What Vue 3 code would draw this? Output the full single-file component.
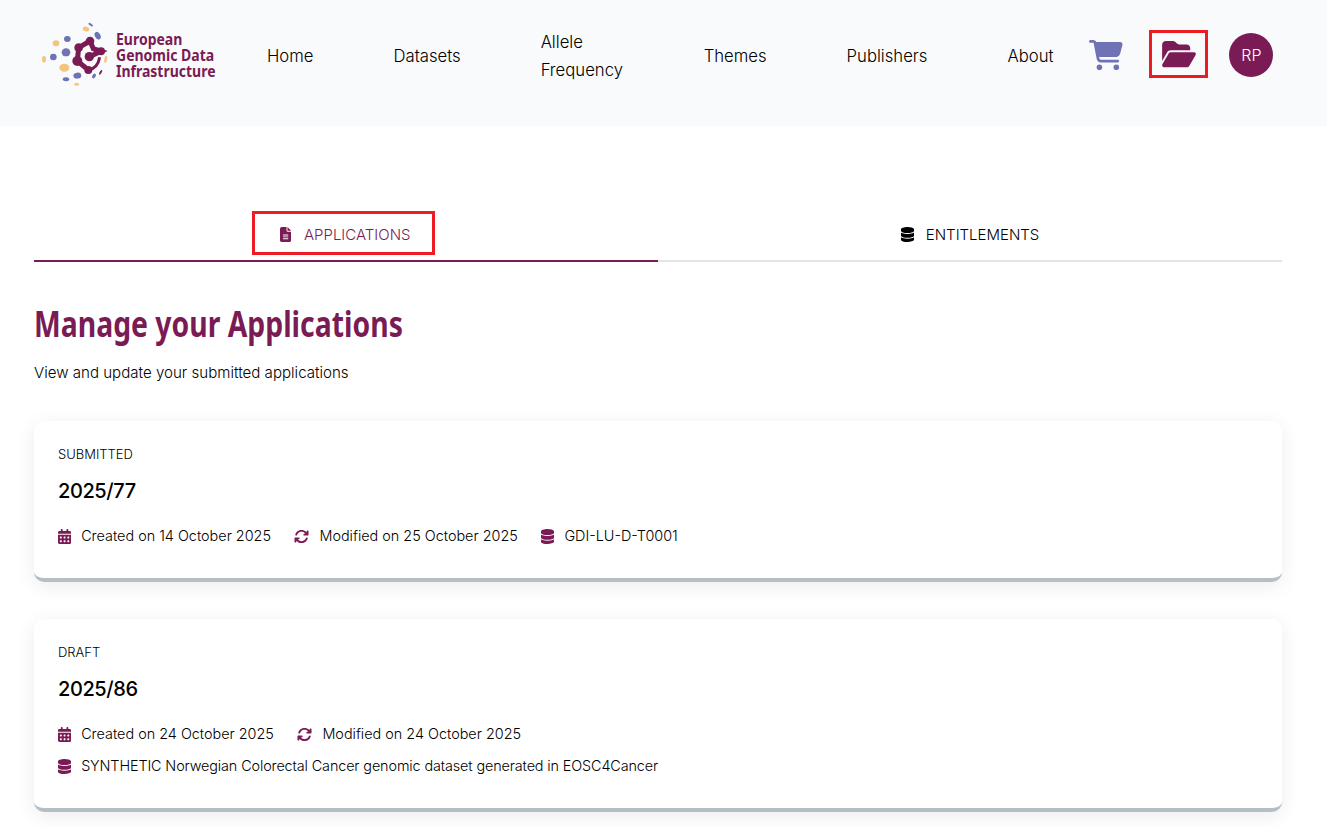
<script setup>
const navLinks = ['Home', 'Datasets', 'Allele Frequency', 'Themes', 'Publishers', 'About']

const icons = {
  calendar: { box: '0 0 448 512', d: 'M128 0c17.7 0 32 14.3 32 32V64H288V32c0-17.7 14.3-32 32-32s32 14.3 32 32V64h48c26.5 0 48 21.5 48 48v48H0V112C0 85.5 21.5 64 48 64H96V32c0-17.7 14.3-32 32-32zM0 192H448V464c0 26.5-21.5 48-48 48H48c-26.5 0-48-21.5-48-48V192zm64 80v32c0 8.8 7.2 16 16 16h32c8.8 0 16-7.2 16-16V272c0-8.8-7.2-16-16-16H80c-8.8 0-16 7.2-16 16zm128 0v32c0 8.8 7.2 16 16 16h32c8.8 0 16-7.2 16-16V272c0-8.8-7.2-16-16-16H208c-8.8 0-16 7.2-16 16zm144-16c-8.8 0-16 7.2-16 16v32c0 8.8 7.2 16 16 16h32c8.8 0 16-7.2 16-16V272c0-8.8-7.2-16-16-16H336zM64 400v32c0 8.8 7.2 16 16 16h32c8.8 0 16-7.2 16-16V400c0-8.8-7.2-16-16-16H80c-8.8 0-16 7.2-16 16zm144-16c-8.8 0-16 7.2-16 16v32c0 8.8 7.2 16 16 16h32c8.8 0 16-7.2 16-16V400c0-8.8-7.2-16-16-16H208zm112 16v32c0 8.8 7.2 16 16 16h32c8.8 0 16-7.2 16-16V400c0-8.8-7.2-16-16-16H336c-8.8 0-16 7.2-16 16z' },
  sync: { box: '0 0 512 512', d: 'M105.1 202.6c7.7-21.8 20.2-42.3 37.8-59.8c62.5-62.5 163.8-62.5 226.3 0L386.3 160H352c-17.7 0-32 14.3-32 32s14.3 32 32 32H463.5c0 0 0 0 0 0h.4c17.7 0 32-14.3 32-32V80c0-17.7-14.3-32-32-32s-32 14.3-32 32v35.2L414.4 97.6c-87.5-87.5-229.3-87.5-316.8 0C73.2 122 55.6 150.7 44.8 181.4c-5.9 16.7 2.9 34.9 19.5 40.8s34.9-2.9 40.8-19.5zM39 289.3c-5 1.5-9.8 4.2-13.7 8.2c-4 4-6.7 8.8-8.1 14c-.3 1.2-.6 2.5-.8 3.8c-.3 1.7-.4 3.4-.4 5.1V432c0 17.7 14.3 32 32 32s32-14.3 32-32V396.9l17.6 17.5 0 0c87.5 87.4 229.3 87.4 316.7 0c24.4-24.4 42.1-53.1 52.9-83.7c5.9-16.7-2.9-34.9-19.5-40.8s-34.9 2.9-40.8 19.5c-7.7 21.8-20.2 42.3-37.8 59.8c-62.5 62.5-163.8 62.5-226.3 0l-.1-.1L125.6 352H160c17.7 0 32-14.3 32-32s-14.3-32-32-32H48.4c-1.6 0-3.2 .1-4.8 .3s-3.1 .5-4.6 1z' },
  database: { box: '0 0 448 512', d: 'M448 80v48c0 44.2-100.3 80-224 80S0 172.2 0 128V80C0 35.8 100.3 0 224 0S448 35.8 448 80zM393.2 214.7c20.8-7.4 39.9-16.9 54.8-28.6V288c0 44.2-100.3 80-224 80S0 332.2 0 288V186.1c14.9 11.8 34 21.2 54.8 28.6C99.7 230.7 159.5 240 224 240s124.3-9.3 169.2-25.3zM0 346.1c14.9 11.8 34 21.2 54.8 28.6C99.7 390.7 159.5 400 224 400s124.3-9.3 169.2-25.3c20.8-7.4 39.9-16.9 54.8-28.6V432c0 44.2-100.3 80-224 80S0 476.2 0 432V346.1z' },
  file: { box: '0 0 384 512', d: 'M64 0C28.7 0 0 28.7 0 64V448c0 35.3 28.7 64 64 64H320c35.3 0 64-28.7 64-64V160H256c-17.7 0-32-14.3-32-32V0H64zM256 0V128H384L256 0zM112 256H272c8.8 0 16 7.2 16 16s-7.2 16-16 16H112c-8.8 0-16-7.2-16-16s7.2-16 16-16zm0 64H272c8.8 0 16 7.2 16 16s-7.2 16-16 16H112c-8.8 0-16-7.2-16-16s7.2-16 16-16zm0 64H272c8.8 0 16 7.2 16 16s-7.2 16-16 16H112c-8.8 0-16-7.2-16-16s7.2-16 16-16z' }
}

const applications = [
  {
    status: 'SUBMITTED',
    id: '2025/77',
    rows: [[
      { icon: 'calendar', text: 'Created on 14 October 2025' },
      { icon: 'sync', text: 'Modified on 25 October 2025' },
      { icon: 'database', text: 'GDI-LU-D-T0001' }
    ]]
  },
  {
    status: 'DRAFT',
    id: '2025/86',
    rows: [
      [
        { icon: 'calendar', text: 'Created on 24 October 2025' },
        { icon: 'sync', text: 'Modified on 24 October 2025' }
      ],
      [{ icon: 'database', text: 'SYNTHETIC Norwegian Colorectal Cancer genomic dataset generated in EOSC4Cancer', tight: true }]
    ]
  }
]

// cx, cy, rx, ry, colour, rotation
const logoDots = [
  [42, 148, 6, 10, '#f5c57e', 0], [78, 100, 10, 9, '#f5c57e', 0], [103, 173, 15, 12, '#f5c57e', 0],
  [168, 57, 10, 7, '#f5c57e', 15], [140, 223, 8, 4, '#f5c57e', 0], [227, 148, 4, 11, '#f5c57e', 10],
  [70, 141, 10, 10, '#6f72b4', 0], [108, 127, 13, 12, '#6f72b4', 0], [112, 87, 10, 9, '#6f72b4', 0],
  [142, 197, 12, 9, '#6f72b4', -10], [108, 208, 10, 6, '#6f72b4', 5], [182, 44, 8, 3, '#6f72b4', 35],
  [203, 77, 8, 12, '#6f72b4', -30], [192, 198, 5, 8, '#6f72b4', 30], [212, 187, 3, 8, '#7a1b55', 30]
]
const logoNodes = [
  [180, 93, 13], [146, 113, 13], [142, 153, 15], [178, 140, 14], [213, 124, 12], [175, 180, 12]
]
</script>

<template>
  <div class="page">
    <header class="topbar">
      <div class="logo">
        <svg class="logo-mark" viewBox="30 30 210 210" width="70" height="70">
          <ellipse
            v-for="(dot, i) in logoDots"
            :key="i"
            :cx="dot[0]"
            :cy="dot[1]"
            :rx="dot[2]"
            :ry="dot[3]"
            :fill="dot[4]"
            :transform="`rotate(${dot[5]} ${dot[0]} ${dot[1]})`"
          />
          <path
            d="M180 93 L146 113 L142 153 L175 180 M180 93 L190 116 L213 124 L178 140"
            fill="none"
            stroke="#7a1b55"
            stroke-width="15"
          />
          <path d="M175 180 Q203 176 209 142" fill="none" stroke="#7a1b55" stroke-width="9" />
          <circle v-for="(node, i) in logoNodes" :key="i" :cx="node[0]" :cy="node[1]" :r="node[2]" fill="#7a1b55" />
        </svg>
        <div class="logo-text">
          <span>European</span>
          <span>Genomic Data</span>
          <span>Infrastructure</span>
        </div>
      </div>

      <nav class="main-nav">
        <a v-for="link in navLinks" :key="link" class="nav-link">{{ link }}</a>
      </nav>

      <div class="actions">
        <svg class="cart" viewBox="0 0 576 512" width="34" height="30">
          <path d="M0 24C0 10.7 10.7 0 24 0H69.5c22 0 41.5 12.8 50.6 32h411c26.3 0 45.5 25 38.6 50.4l-41 152.3c-8.5 31.4-37 53.3-69.5 53.3H170.7l5.4 28.5c2.2 11.3 12.1 19.5 23.6 19.5H488c13.3 0 24 10.7 24 24s-10.7 24-24 24H199.7c-34.6 0-64.3-24.6-70.7-58.5L77.4 54.5c-.7-3.8-4-6.5-7.9-6.5H24C10.7 48 0 37.3 0 24zM128 464a48 48 0 1 1 96 0 48 48 0 1 1 -96 0zm336-48a48 48 0 1 1 0 96 48 48 0 1 1 0-96z" />
        </svg>
        <div class="folder-box">
          <svg viewBox="0 0 576 512" width="34" height="30">
            <path d="M88.7 223.8L0 375.8V96C0 60.7 28.7 32 64 32H181.5c17 0 33.3 6.7 45.3 18.7l26.5 26.5c12 12 28.3 18.7 45.3 18.7H416c35.3 0 64 28.7 64 64v32H144c-22.8 0-43.8 12.1-55.3 31.8zm27.6 16.1C122.1 230 132.6 224 144 224H544c11.5 0 22 6.1 27.7 16.1s5.7 22.2-.1 32.1l-112 192C453.9 474 443.4 480 432 480H32c-11.5 0-22-6.1-27.7-16.1s-5.7-22.2 .1-32.1l112-192z" />
          </svg>
        </div>
        <div class="avatar">RP</div>
      </div>
    </header>

    <main class="content">
      <div class="tabs">
        <div class="tab active">
          <div class="tab-label marked">
            <svg class="tab-icon" :viewBox="icons.file.box"><path :d="icons.file.d" /></svg>
            <span>APPLICATIONS</span>
          </div>
        </div>
        <div class="tab">
          <div class="tab-label">
            <svg class="tab-icon" :viewBox="icons.database.box"><path :d="icons.database.d" /></svg>
            <span>ENTITLEMENTS</span>
          </div>
        </div>
      </div>

      <h1>Manage your Applications</h1>
      <p class="subtitle">View and update your submitted applications</p>

      <section v-for="app in applications" :key="app.id" class="card">
        <div class="status">{{ app.status }}</div>
        <h2>{{ app.id }}</h2>
        <div class="meta-rows">
          <div v-for="(row, r) in app.rows" :key="r" class="meta-row">
            <div v-for="item in row" :key="item.text" class="meta" :class="{ tight: item.tight }">
              <svg class="meta-icon" :viewBox="icons[item.icon].box"><path :d="icons[item.icon].d" /></svg>
              <span>{{ item.text }}</span>
            </div>
          </div>
        </div>
      </section>
    </main>
  </div>
</template>

<style>
html, body {
  margin: 0;
  background: #fff;
}
</style>

<style scoped>
.page {
  height: 827px;
  overflow: hidden;
  font-family: "Inter", "Liberation Sans", sans-serif;
  font-weight: 350;
  color: #000;
}

.topbar {
  height: 126px;
  background: #f9fafc;
  display: flex;
  align-items: flex-start;
  padding-left: 40px;
  box-sizing: border-box;
}

.logo {
  display: flex;
  align-items: center;
  width: 176px;
  height: 70px;
  margin-top: 20px;
}

.logo-mark {
  flex: none;
}

.logo-text {
  display: flex;
  flex-direction: column;
  margin-left: 6px;
  font-family: "Noto Sans", sans-serif;
  font-weight: 700;
  font-size: 16px;
  line-height: 16px;
  color: #7a1b55;
  white-space: nowrap;
  transform: scaleX(0.875);
  transform-origin: left center;
}

.main-nav {
  display: flex;
  align-items: center;
  gap: 80px;
  margin-left: 51px;
  height: 112px;
}

.nav-link {
  font-size: 16.7px;
  line-height: 28px;
  max-width: 83px;
}

.actions {
  display: flex;
  align-items: center;
  height: 110px;
  margin-left: 36px;
}

.cart {
  fill: #6f72b4;
}

.folder-box {
  width: 59px;
  height: 48px;
  margin-left: 26px;
  margin-bottom: 2px;
  border: 3px solid #ed1c24;
  box-sizing: border-box;
  display: flex;
  align-items: center;
  justify-content: center;
  fill: #7a1b55;
}

.avatar {
  width: 44px;
  height: 44px;
  margin-left: 21px;
  border-radius: 50%;
  background: #7a1b55;
  color: #fff;
  font-size: 16px;
  display: flex;
  align-items: center;
  justify-content: center;
}

.content {
  padding: 84px 45px 0 34px;
}

.tabs {
  display: flex;
  border-bottom: 2px solid #e4e4e7;
}

.tab {
  flex: 1;
  height: 50px;
  margin-bottom: -2px;
  display: flex;
  justify-content: center;
  align-items: flex-start;
  border-bottom: 2px solid transparent;
}

.tab.active {
  border-bottom-color: #7a1b55;
  color: #7a1b55;
}

.tab-label {
  display: flex;
  align-items: center;
  gap: 12px;
  height: 48px;
  padding-top: 1px;
  font-size: 15px;
  box-sizing: border-box;
}

.tab-label.marked {
  height: 44px;
  margin: 1px 5px 0 0;
  padding: 3px 21.5px 0 25px;
  border: 3px solid #ed1c24;
  gap: 12.75px;
}

.tab-icon {
  height: 15px;
  width: auto;
  fill: currentColor;
}

h1 {
  margin: 38px 0 0;
  font-family: "Noto Sans", sans-serif;
  font-size: 35px;
  line-height: 48px;
  font-weight: 700;
  color: #7a1b55;
  transform: scaleX(0.81);
  transform-origin: left center;
  white-space: nowrap;
}

.subtitle {
  margin: 13px 0 0;
  font-size: 15.1px;
  line-height: 24px;
}

.card {
  margin-top: 36px;
  padding: 23px 24px 30px;
  background: #fff;
  border-radius: 10px;
  border-bottom: 4px solid #b4bfc5;
  box-shadow: 0 4px 20px rgba(0, 0, 0, 0.08);
}

.card + .card {
  margin-top: 37px;
}

.status {
  font-size: 13px;
  line-height: 20px;
}

h2 {
  margin: 12px 0 0;
  font-size: 20px;
  line-height: 30px;
  font-weight: 500;
  letter-spacing: -0.4px;
}

.meta-rows {
  margin-top: 18px;
  display: flex;
  flex-direction: column;
  gap: 8px;
}

.meta-row {
  display: flex;
  gap: 23.5px;
}

.meta {
  display: flex;
  align-items: center;
  gap: 10px;
  font-size: 14.4px;
  line-height: 24px;
}

.meta.tight {
  letter-spacing: -0.12px;
}

.meta-icon {
  height: 15px;
  width: auto;
  fill: #7a1b55;
}
</style>
